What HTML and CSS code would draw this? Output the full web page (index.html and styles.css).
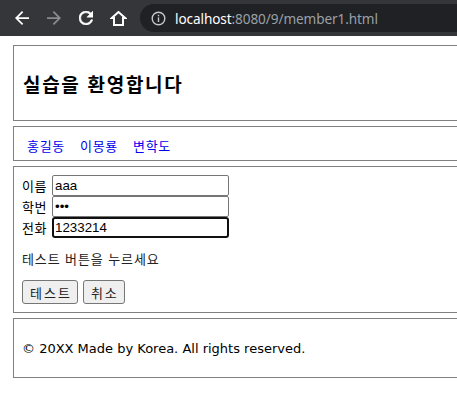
FILE: index.html
```html
<!DOCTYPE html>
<html lang="ko">
<head>
<meta charset="utf-8">
<title>member1</title>
<link rel="stylesheet" href="styles.css">
</head>
<body>
<div class="chrome">
  <div class="navicons">
    <svg class="ico" width="14" height="14" viewBox="4 4 16 16"><path fill="#ffffff" d="M20 11H7.83l5.59-5.59L12 4l-8 8 8 8 1.41-1.41L7.83 13H20v-2z"/></svg>
    <svg class="ico" width="14" height="14" viewBox="4 4 16 16"><path fill="#8a8b8d" d="M4 11h12.17l-5.59-5.59L12 4l8 8-8 8-1.41-1.41L16.170 13H4v-2z"/></svg>
    <svg class="ico" width="14" height="14" viewBox="4 4 16 16"><path fill="#ffffff" stroke="#ffffff" stroke-width="0.6" d="M17.65 6.35C16.2 4.9 14.21 4 12 4c-4.42 0-7.99 3.58-7.99 8s3.57 8 7.99 8c3.73 0 6.84-2.55 7.73-6h-2.08c-.82 2.33-3.04 4-5.65 4-3.31 0-6-2.69-6-6s2.69-6 6-6c1.66 0 3.14.69 4.22 1.78L13 11h7V4l-2.35 2.35z"/></svg>
    <svg class="ico home" width="17" height="16" viewBox="0 0 17 16"><path fill="none" stroke="#ffffff" stroke-width="2" stroke-linejoin="miter" d="M8.5 2 L1.8 8 H4 V15 H13 V8 H15.2 Z"/></svg>
  </div>
  <div class="omnibox">
    <svg class="info" width="15" height="15" viewBox="0 0 15 15"><circle cx="7.5" cy="7.5" r="6.3" fill="none" stroke="#c4c7ca" stroke-width="1.4"/><rect x="6.8" y="6.4" width="1.4" height="4.6" fill="#c4c7ca"/><rect x="6.8" y="3.8" width="1.4" height="1.5" fill="#c4c7ca"/></svg>
    <span class="url"><span class="host">localhost</span><span class="path">:8080/9/member1.html</span></span>
  </div>
</div>

<main class="page">
  <header class="box head">
    <h2 class="title">실습을 환영합니다</h2>
  </header>

  <nav class="box menu">
    <a href="#" class="link">홍길동</a>
    <a href="#" class="link">이몽룡</a>
    <a href="#" class="link">변학도</a>
  </nav>

  <section class="box form">
    <div class="row"><span class="label">이름</span><input class="field" type="text" value="aaa"></div>
    <div class="row"><span class="label">학번</span><input class="field" type="password" value="aaa"></div>
    <div class="row"><span class="label">전화</span><input class="field focused" type="text" value="1233214"></div>
    <p class="msg">테스트 버튼을 누르세요</p>
    <div class="buttons">
      <button class="btn" type="button">테스트</button>
      <button class="btn" type="button">취소</button>
    </div>
  </section>

  <footer class="box foot">
    <p class="copy">© 20XX Made by Korea. All rights reserved.</p>
  </footer>
</main>
</body>
</html>
```
FILE: styles.css
```css
html, body {
  margin: 0;
  padding: 0;
  overflow: hidden;
  background: #ffffff;
}

body {
  width: 457px;
  font-family: "Liberation Sans", "Noto Sans CJK KR", sans-serif;
  color: #000;
}

.chrome {
  height: 36px;
  background: #35363a;
  display: flex;
  align-items: center;
  overflow: hidden;
}

.navicons {
  display: flex;
  align-items: center;
  gap: 18px;
  padding-left: 15px;
  flex: none;
}

.ico {
  display: block;
}

.home {
  margin-left: -1px;
}

.omnibox {
  margin-left: 13px;
  height: 28px;
  flex: 1;
  border-radius: 14px 0 0 14px;
  background: #202124;
  display: flex;
  align-items: center;
  padding-left: 11px;
  gap: 9px;
}

.info {
  display: block;
}

.url {
  font-family: "Noto Sans", "Liberation Sans", sans-serif;
  font-size: 13.6px;
  letter-spacing: -0.1px;
  white-space: nowrap;
}

.host {
  color: #ffffff;
}

.path {
  color: #9aa0a6;
}

.page {
  display: flex;
  flex-direction: column;
  gap: 5px;
  padding: 9px 0 0 13px;
  overflow: hidden;
}

.box {
  width: 480px;
  flex: none;
  border: 1px solid #808080;
  box-sizing: border-box;
}

.head {
  height: 76px;
  display: flex;
  align-items: center;
  padding-left: 9px;
}

.title {
  margin: 0;
  font-family: "Noto Sans CJK KR", sans-serif;
  font-size: 19px;
  font-weight: 700;
  letter-spacing: 1.7px;
  line-height: 24px;
  padding-top: 1px;
}

.menu {
  height: 35px;
  display: flex;
  align-items: center;
  gap: 15px;
  padding: 3px 0 0 13px;
}

.link {
  color: #0000ee;
  text-decoration: none;
  font-family: "Noto Sans CJK KR", sans-serif;
  font-size: 13px;
  letter-spacing: 0.7px;
}

.form {
  padding: 8px 0 8px 8px;
  font-size: 13px;
}

.row {
  display: flex;
  align-items: center;
  gap: 4px;
  height: 21px;
}

.label {
  font-family: "Noto Sans CJK KR", sans-serif;
  font-size: 13px;
  letter-spacing: 0.5px;
  width: 26px;
}

.field {
  box-sizing: border-box;
  width: 177px;
  height: 21px;
  margin: 0;
  border: 1px solid #767676;
  border-radius: 2px;
  padding: 1px 2px;
  font-family: "Liberation Sans", sans-serif;
  font-size: 13.33px;
  color: #000;
  outline: none;
}

.focused {
  border: 2px solid #101010;
  border-radius: 3px;
  padding: 0 1px;
}

.msg {
  margin: 12px 0 13px;
  line-height: 17px;
  font-family: "Noto Sans CJK KR", sans-serif;
  font-size: 13px;
  letter-spacing: 0.9px;
  color: #222;
}

.buttons {
  display: flex;
  gap: 5px;
}

.btn {
  height: 24px;
  margin: 0;
  padding: 0 5px 0 7px;
  background: #efefef;
  border: 1px solid #767676;
  border-radius: 3px;
  font-family: "Noto Sans CJK KR", sans-serif;
  font-size: 13px;
  letter-spacing: 2px;
  color: #222;
}

.foot {
  height: 60px;
  display: flex;
  align-items: center;
  padding-left: 8px;
}

.copy {
  margin: 0;
  font-family: "DejaVu Sans", Verdana, sans-serif;
  font-size: 13px;
  padding-top: 1px;
}
```
